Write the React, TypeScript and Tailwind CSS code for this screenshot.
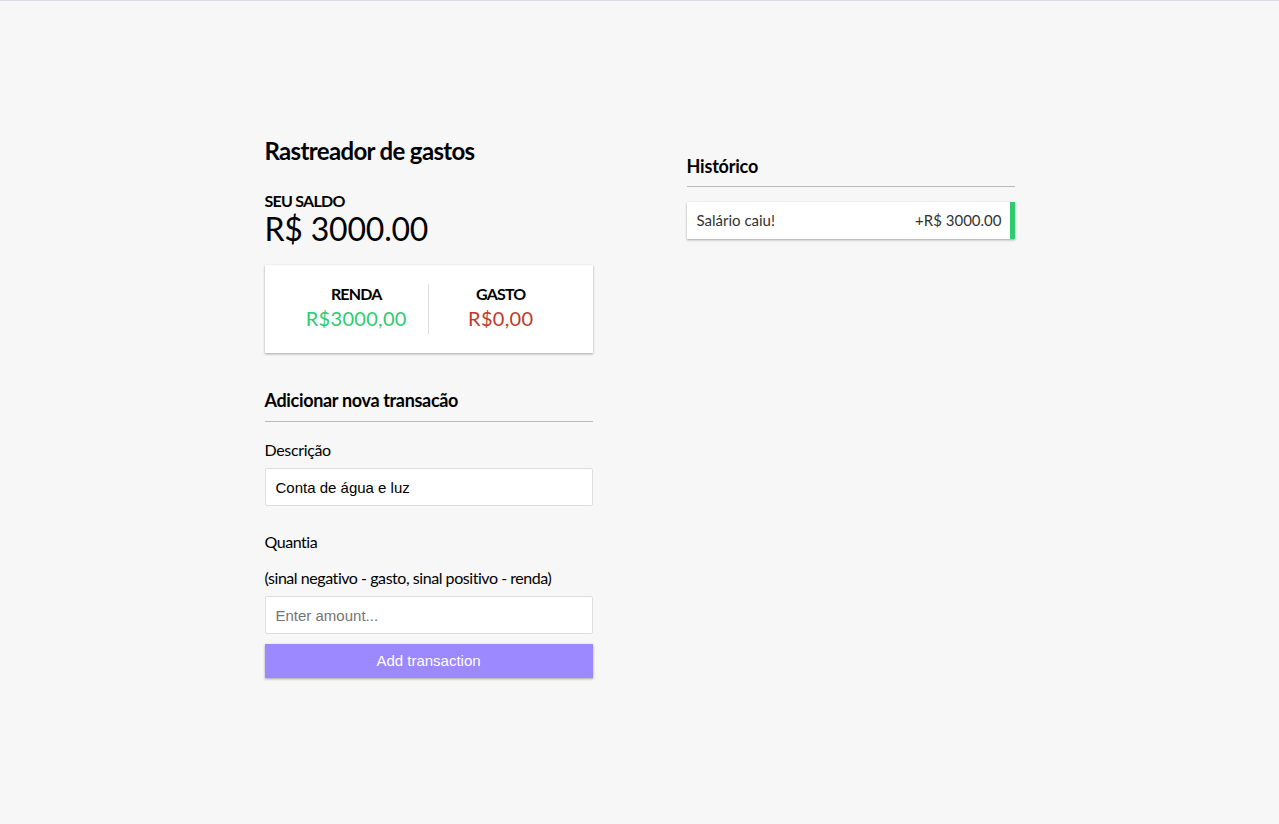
export default function App() {
  const cardShadow = 'shadow-[0_1px_3px_rgba(0,0,0,0.12),0_1px_2px_rgba(0,0,0,0.24)]';
  return (
    <div
      className="min-h-[824px] bg-[#f7f7f7] border-t border-[#dcdce4] text-black"
      style={{ fontFamily: 'Lato, "Open Sans", sans-serif' }}
    >
      <div className="flex justify-center gap-[94px] pt-[135px]">
        {/* Left column */}
        <div className="w-[328px]">
          <h2 className="text-[24px] leading-[29px] font-bold tracking-[-0.65px]">Rastreador de gastos</h2>

          <h4 className="mt-[26px] text-[16px] leading-[19px] font-bold uppercase tracking-[-0.75px]">Seu saldo</h4>
          <h1 className="text-[32px] leading-[38px] font-normal tracking-[-0.2px]">R$ 3000.00</h1>

          <div className={`mt-[17px] bg-white ${cardShadow} py-[19px] px-[20px] flex justify-between`}>
            <div className="flex-1 text-center border-r border-[#dedede]">
              <h4 className="text-[16px] leading-[19px] font-bold uppercase tracking-[-0.8px]">Renda</h4>
              <p className="text-[20px] leading-[31px] text-[#2ecc71] tracking-[0.3px]">R$3000,00</p>
            </div>
            <div className="flex-1 text-center">
              <h4 className="text-[16px] leading-[19px] font-bold uppercase tracking-[-0.8px]">Gasto</h4>
              <p className="text-[20px] leading-[31px] text-[#c0392b] tracking-[0.3px]">R$0,00</p>
            </div>
          </div>

          <h3 className="mt-[36px] text-[18px] leading-[22px] font-bold border-b border-[#bbb] pb-[10px] tracking-[-0.33px]">
            Adicionar nova transacão
          </h3>

          <form className="mt-[18px]">
            <div>
              <label className="block text-[16px] leading-[19px] mb-[9px] tracking-[-0.35px]">Descrição</label>
              <input
                type="text"
                defaultValue="Conta de água e luz"
                className="block w-full h-[38px] border border-[#dedede] rounded-[2px] bg-white px-[10px] text-[15px] text-black outline-none"
                style={{ fontFamily: '"Liberation Sans", Arial, sans-serif' }}
              />
            </div>
            <div className="mt-[26px]">
              <label className="block text-[16px] leading-[19px] tracking-[-0.45px]">
                Quantia
                <br />
                <span className="block mt-[17px]">(sinal negativo - gasto, sinal positivo - renda)</span>
              </label>
              <input
                type="number"
                placeholder="Enter amount..."
                className="mt-[9px] block w-full h-[38px] border border-[#dedede] rounded-[2px] bg-white px-[10px] text-[15px] text-black placeholder:text-[#757575] outline-none"
                style={{ fontFamily: '"Liberation Sans", Arial, sans-serif' }}
              />
            </div>
            <button
              type="button"
              className={`mt-[10px] block w-full h-[34px] bg-[#9c88ff] text-white text-[15px] ${cardShadow}`}
              style={{ fontFamily: '"Liberation Sans", Arial, sans-serif' }}
            >
              Add transaction
            </button>
          </form>
        </div>

        {/* Right column */}
        <div className="w-[328px] pt-[19px]">
          <h3 className="text-[18px] leading-[22px] font-bold border-b border-[#bbb] pb-[9px] tracking-[-0.2px]">Histórico</h3>
          <ul className="mt-[15px]">
            <li className={`bg-white ${cardShadow} flex justify-between items-center h-[37px] pl-[10px] pr-[8px] border-r-[5px] border-[#2ecc71] text-[15px] text-[#333]`}>
              <span>Salário caiu!</span>
              <span>+R$ 3000.00</span>
            </li>
          </ul>
        </div>
      </div>
    </div>
  );
}
